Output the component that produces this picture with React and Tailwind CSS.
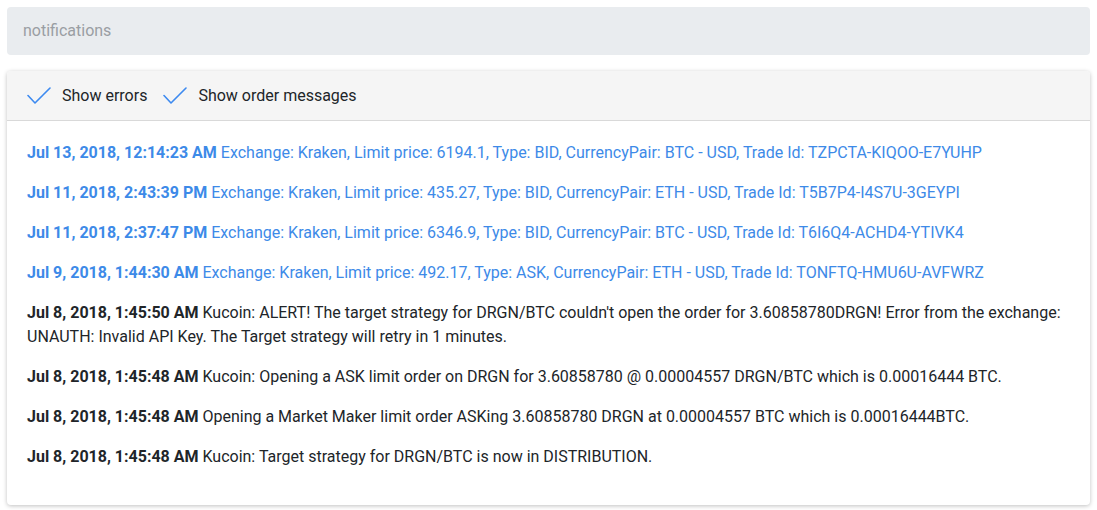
import { useState } from "react";

const orders = [
  { date: "Jul 13, 2018, 12:14:23 AM", text: "Exchange: Kraken, Limit price: 6194.1, Type: BID, CurrencyPair: BTC - USD, Trade Id: TZPCTA-KIQOO-E7YUHP" },
  { date: "Jul 11, 2018, 2:43:39 PM", text: "Exchange: Kraken, Limit price: 435.27, Type: BID, CurrencyPair: ETH - USD, Trade Id: T5B7P4-I4S7U-3GEYPI" },
  { date: "Jul 11, 2018, 2:37:47 PM", text: "Exchange: Kraken, Limit price: 6346.9, Type: BID, CurrencyPair: BTC - USD, Trade Id: T6I6Q4-ACHD4-YTIVK4" },
  { date: "Jul 9, 2018, 1:44:30 AM", text: "Exchange: Kraken, Limit price: 492.17, Type: ASK, CurrencyPair: ETH - USD, Trade Id: TONFTQ-HMU6U-AVFWRZ" },
];

const messages = [
  { date: "Jul 8, 2018, 1:45:50 AM", text: "Kucoin: ALERT! The target strategy for DRGN/BTC couldn't open the order for 3.60858780DRGN! Error from the exchange: UNAUTH: Invalid API Key. The Target strategy will retry in 1 minutes." },
  { date: "Jul 8, 2018, 1:45:48 AM", text: "Kucoin: Opening a ASK limit order on DRGN for 3.60858780 @ 0.00004557 DRGN/BTC which is 0.00016444 BTC." },
  { date: "Jul 8, 2018, 1:45:48 AM", text: "Opening a Market Maker limit order ASKing 3.60858780 DRGN at 0.00004557 BTC which is 0.00016444BTC." },
  { date: "Jul 8, 2018, 1:45:48 AM", text: "Kucoin: Target strategy for DRGN/BTC is now in DISTRIBUTION." },
];

function Check() {
  return (
    <svg width="24" height="18" viewBox="0 0 24 18" className="shrink-0">
      <path d="M1 8.5 L8 16 L23 1" fill="none" stroke="#3d8af0" strokeWidth="1.6" strokeLinecap="round" strokeLinejoin="round" />
    </svg>
  );
}

export default function App() {
  const [showErrors, setShowErrors] = useState(true);
  const [showOrders, setShowOrders] = useState(true);

  return (
    <div className="bg-white min-h-[510px] px-[7px] pt-[7px] text-[16px] text-[#212529]" style={{ fontFamily: "Roboto, 'Liberation Sans', sans-serif" }}>
      <div className="h-[48px] bg-[#e9ecef] rounded-[4px] flex items-center px-4 text-[#9a9ea3]">
        notifications
      </div>

      <div className="mt-4 bg-white rounded-[4px] shadow-[0_1px_4px_rgba(0,0,0,0.25)] overflow-hidden">
        <div className="h-[50px] bg-[#f5f5f5] border-b border-[#d9d9d9] flex items-center px-5">
          <button onClick={() => setShowErrors(p => !p)} className="flex items-center gap-[11px] mr-4">
            {showErrors && <Check />}
            <span>Show errors</span>
          </button>
          <button onClick={() => setShowOrders(p => !p)} className="flex items-center gap-[11px]">
            {showOrders && <Check />}
            <span>Show order messages</span>
          </button>
        </div>

        <div className="px-5 pt-5 pb-5 leading-6">
          {showOrders && orders.map((o, i) => (
            <p key={i} className="mb-4 text-[#3d8ae8]">
              <span className="font-bold">{o.date}</span> {o.text}
            </p>
          ))}
          {showErrors && messages.map((m, i) => (
            <p key={i} className="mb-4">
              <span className="font-bold">{m.date}</span> {m.text}
            </p>
          ))}
        </div>
      </div>
    </div>
  );
}
